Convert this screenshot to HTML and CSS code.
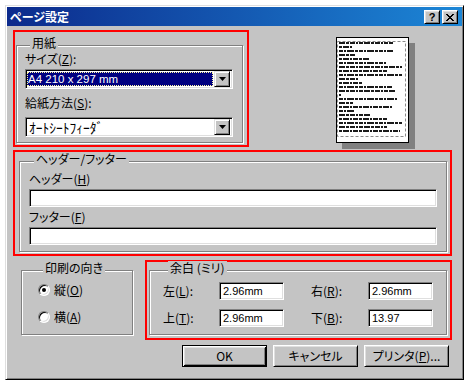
FILE: index.html
```html
<!DOCTYPE html>
<html lang="ja">
<head>
    <meta charset="UTF-8">
    <title>ページ設定</title>
    <link rel="stylesheet" href="styles.css">
</head>
<body>
    <div class="window">
        <div class="titlebar">
            <span class="title">ページ設定</span>
            <span class="tb-btn tb-help">?</span>
            <span class="tb-btn tb-close">
                <svg width="8" height="7" viewBox="0 0 8 7"><path d="M0 0h2v1H0z M6 0h2v1H6z M1 1h2v1H1z M5 1h2v1H5z M2 2h4v1H2z M3 3h2v1H3z M2 4h4v1H2z M1 5h2v1H1z M5 5h2v1H5z M0 6h2v1H0z M6 6h2v1H6z"/></svg>
            </span>
        </div>

        <div class="dialog">
            <div class="row">
                <div class="mark mark-paper">
                    <div class="group paper">
                        <div class="group-title">用紙</div>
                        <div class="label">サイズ(<u>Z</u>):</div>
                        <div class="combo">
                            <span class="combo-value selected">A4 210 x 297 mm</span>
                            <span class="combo-btn"><svg width="7" height="4" viewBox="0 0 7 4"><path d="M0 0h7L3.5 4z"/></svg></span>
                        </div>
                        <div class="label label-second">給紙方法(<u>S</u>):</div>
                        <div class="combo combo-second">
                            <span class="combo-value kana">ｵｰﾄｼｰﾄﾌｨｰﾀﾞ</span>
                            <span class="combo-btn"><svg width="7" height="4" viewBox="0 0 7 4"><path d="M0 0h7L3.5 4z"/></svg></span>
                        </div>
                    </div>
                </div>

                <!-- page preview -->
                <div class="preview">
                    <div class="page">
                        <svg width="71" height="104" viewBox="0 0 71 104">
                            <rect x="0.5" y="3.5" width="68" height="95" fill="none" stroke="#8a8a8a" stroke-dasharray="3 2"/>
                            <path class="ln-a" d="M2 5H56 M2 17H18 M2 29H65 M2 41H21 M2 53H58 M2 65H16 M2 77H33 M2 89H50"/>
                            <path class="ln-b" d="M2 9H16 M2 21H33 M2 33H50 M2 45H25 M2 57H4 M2 69H56 M2 81H50 M2 93H63"/>
                            <path class="ln-c" d="M2 13H56 M2 25H50 M2 37H65 M2 49H55 M2 61H60 M2 73H18 M2 85H65"/>
                        </svg>
                    </div>
                </div>
            </div>

            <div class="mark mark-header">
                <div class="group headers">
                    <div class="group-title">ヘッダー/フッター</div>
                    <div class="label">ヘッダー(<u>H</u>)</div>
                    <div class="field field-wide"></div>
                    <div class="label label-second">フッター(<u>F</u>)</div>
                    <div class="field field-wide field-second"></div>
                </div>
            </div>

            <div class="row row-bottom">
                <div class="group orient">
                    <div class="group-title">印刷の向き</div>
                    <div class="radio-row"><span class="radio"><span class="dot"></span></span>縦(<u>O</u>)</div>
                    <div class="radio-row radio-second"><span class="radio"></span>横(<u>A</u>)</div>
                </div>

                <div class="mark mark-margins">
                    <div class="group margins">
                        <div class="group-title">余白 (ミリ)</div>
                        <div class="margin-grid">
                            <span class="m-label">左(<u>L</u>):</span>
                            <div class="field">2.96mm</div>
                            <span class="m-label m-right">右(<u>R</u>):</span>
                            <div class="field">2.96mm</div>
                            <span class="m-label">上(<u>T</u>):</span>
                            <div class="field">2.96mm</div>
                            <span class="m-label m-right">下(<u>B</u>):</span>
                            <div class="field">13.97</div>
                        </div>
                    </div>
                </div>
            </div>

            <div class="buttons">
                <button class="btn btn-default">OK</button>
                <button class="btn">キャンセル</button>
                <button class="btn">プリンタ(<u>P</u>)...</button>
            </div>
        </div>
    </div>
</body>
</html>
```

FILE: styles.css
```css
* { box-sizing: border-box; }
body { margin: 0; background: #fff; color: #000; font: 12px/14px "Noto Sans CJK JP", sans-serif; font-feature-settings: "palt"; }

/* window frame */
.window { margin: 5px 0 0 5px; width: 459px; height: 375px; padding: 1px; background: #c4c4c4; border: 1px solid; border-color: #dfdfdf #000 #000 #dfdfdf; box-shadow: inset 1px 1px #fff, inset -1px -1px #808080; }
.titlebar { display: flex; align-items: flex-start; height: 19px; padding: 3px 4px 0 3px; background: linear-gradient(to right, #0c2a8c, #1c86d6); color: #fff; }
.title { flex: 1; font-weight: bold; line-height: 14px; }
.tb-btn { display: flex; align-items: center; justify-content: center; width: 16px; height: 14px; background: #c4c4c4; color: #000; border: 1px solid; border-color: #fff #000 #000 #fff; box-shadow: inset 1px 1px #dfdfdf, inset -1px -1px #808080; }
.tb-help { margin-right: 2px; font: bold 11px/12px "Liberation Sans", sans-serif; }

.dialog { padding: 4px 0 0 6px; }
.row { display: flex; align-items: flex-start; }

/* red annotation boxes */
.mark { border: 2px solid #f00; }
.mark-paper { width: 236px; padding: 13px 0 2px 1px; }
.mark-header { width: 439px; margin-top: 3px; padding: 9px 0 2px 4px; }
.mark-margins { width: 307px; margin-left: 12px; padding: 8px 0 3px 2px; }

/* etched group boxes */
.group { border: 1px solid #808080; box-shadow: inset 1px 1px #fff, 1px 1px #fff; }
.group-title { display: table; margin: -10px 0 0 5px; padding: 0 2px; background: #c4c4c4; }

.paper { width: 227px; padding: 0 0 5px 8px; }
.paper .label { margin-top: 2px; }
.paper .label-second { margin-top: 7px; }
.combo { display: flex; width: 208px; height: 20px; margin-top: 3px; background: #fff; border: 1px solid; border-color: #808080 #fff #fff #808080; box-shadow: inset 1px 1px #000, inset -1px -1px #dfdfdf; padding: 1px 2px 1px 1px; }
.combo-second { margin-top: 7px; }
.combo-value { flex: 1; padding-left: 2px; font: 11.5px/16px "Liberation Sans", sans-serif; }
.combo-value.kana { font: 13.5px/16px "Noto Sans CJK JP", sans-serif; }
.combo-value.selected { margin: 1px 1px 1px 0; line-height: 14px; padding-left: 1px; background: #000080; color: #fff; outline: 1px dotted #fff8a0; outline-offset: -1px; }
.combo-btn { display: flex; align-items: center; justify-content: center; width: 16px; background: #c4c4c4; border: 1px solid; border-color: #dfdfdf #000 #000 #dfdfdf; box-shadow: inset 1px 1px #fff, inset -1px -1px #808080; }

.preview { margin: 7px 0 0 87px; }
.page { width: 73px; height: 106px; background: #fff; border: 1px solid #000; box-shadow: 6px 6px 0 #808080; }
.page svg { display: block; }
.page path { stroke: #1a1a1a; stroke-width: 2; fill: none; }
.ln-a { stroke-dasharray: 6 1 3 1 5 1 2 1 4 1; }
.ln-b { stroke-dasharray: 3 1 6 1 2 1 5 1; }
.ln-c { stroke-dasharray: 4 1 2 1 7 1 3 1; }

.headers { width: 428px; padding: 0 0 6px 9px; }
.headers .label { margin-top: 6px; }
.headers .label-second { margin-top: 3px; }
.field { height: 18px; padding: 0 3px; background: #fff; border: 1px solid; border-color: #808080 #fff #fff #808080; box-shadow: inset 1px 1px #000, inset -1px -1px #dfdfdf; font: 11px/16px "Liberation Sans", sans-serif; }
.field-wide { width: 408px; margin-top: 3px; }

.row-bottom { margin-top: 4px; }
.orient { width: 112px; height: 65px; margin: 10px 0 0 8px; padding-left: 16px; }
.radio-row { display: flex; align-items: center; margin-top: 8px; }
.radio-second { margin-top: 13px; }
.radio { display: flex; align-items: center; justify-content: center; width: 12px; height: 12px; margin-right: 4px; border-radius: 50%; background: #fff; border: 1px solid; border-color: #808080 #fff #fff #808080; box-shadow: inset 1px 1px #000, inset -1px -1px #dfdfdf; }
.dot { width: 4px; height: 4px; border-radius: 50%; background: #000; }

.margins { width: 298px; padding: 0 0 7px 13px; }
.margin-grid { display: grid; grid-template-columns: 56px 65px 84px 65px; row-gap: 9px; align-items: center; margin-top: 7px; }
.m-right { padding-left: 27px; }

.buttons { display: flex; gap: 6px; margin: 5px 0 0 169px; }
.btn { width: 85px; height: 22px; padding: 0; font: inherit; color: #000; background: #c4c4c4; border: 1px solid; border-color: #fff #000 #000 #fff; box-shadow: inset 1px 1px #dfdfdf, inset -1px -1px #808080; }
.btn-default { border-color: #000; box-shadow: inset 1px 1px #fff, inset -1px -1px #000, inset 2px 2px #dfdfdf, inset -2px -2px #808080; }
```
